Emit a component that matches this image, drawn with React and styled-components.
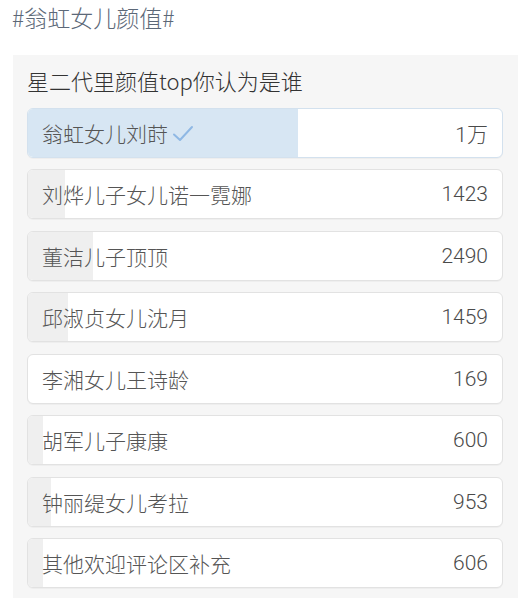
import React from "react";
import styled, { createGlobalStyle } from "styled-components";

const GlobalStyle = createGlobalStyle`
  body {
    margin: 0;
    background: #ffffff;
    font-family: "Noto Sans CJK SC", "Noto Sans", sans-serif;
  }
`;

const options = [
  { name: "翁虹女儿刘莳", count: "1万", fill: 57, chosen: true },
  { name: "刘烨儿子女儿诺一霓娜", count: "1423", fill: 7.8 },
  { name: "董洁儿子顶顶", count: "2490", fill: 13.8 },
  { name: "邱淑贞女儿沈月", count: "1459", fill: 8.4 },
  { name: "李湘女儿王诗龄", count: "169", fill: 0 },
  { name: "胡军儿子康康", count: "600", fill: 3.2 },
  { name: "钟丽缇女儿考拉", count: "953", fill: 4.9 },
  { name: "其他欢迎评论区补充", count: "606", fill: 3.2 },
];

const Page = styled.div`
  width: 532px;
  height: 598px;
  overflow: hidden;
`;

const Topic = styled.div`
  padding: 0 0 0 12px;
  font-size: 23px;
  font-weight: 300;
  line-height: 34px;
  color: #5c6878;
`;

const Panel = styled.div`
  margin: 21px 14px 0 13px;
  background: #f6f6f6;
  padding: 9px 15px 10px 14px;
  display: flex;
  flex-direction: column;
  gap: 11.5px;
`;

const Question = styled.div`
  font-size: 22px;
  font-weight: 300;
  line-height: 32px;
  color: #333333;
`;

const Row = styled.div`
  position: relative;
  height: 50px;
  box-sizing: border-box;
  border: 1px solid ${(p) => (p.chosen ? "#d3e1ee" : "#e2e2e2")};
  border-radius: 6px;
  background: #ffffff;
  overflow: hidden;
  display: flex;
  align-items: center;
  justify-content: space-between;
  padding: 0 14px 0 14px;
  box-shadow: 0 1px 0 rgba(0, 0, 0, 0.03);
`;

const Fill = styled.div`
  position: absolute;
  left: 0;
  top: 0;
  bottom: 0;
  background: ${(p) => (p.chosen ? "#d7e6f3" : "#efefef")};
`;

const Label = styled.span`
  position: relative;
  display: flex;
  align-items: center;
  gap: 3px;
  font-size: 21px;
  font-weight: 300;
  color: #555555;
`;

const Count = styled.span`
  position: relative;
  font-family: Roboto, "Noto Sans CJK SC", sans-serif;
  font-size: 21px;
  font-weight: 300;
  color: #4a4a4a;
`;

const Tick = () => (
  <svg width="24" height="22" viewBox="0 0 24 22" fill="none">
    <path
      d="M3 12.5 L9 18 L21 5"
      stroke="#8fb8e4"
      strokeWidth="2"
      strokeLinecap="round"
      strokeLinejoin="round"
    />
  </svg>
);

export default function App() {
  return (
    <Page>
      <GlobalStyle />
      <Topic>#翁虹女儿颜值#</Topic>
      <Panel>
        <Question>星二代里颜值top你认为是谁</Question>
        {options.map((o) => (
          <Row key={o.name} chosen={o.chosen}>
            <Fill chosen={o.chosen} style={{ width: `${o.fill}%` }} />
            <Label>
              {o.name}
              {o.chosen && <Tick />}
            </Label>
            <Count>{o.count}</Count>
          </Row>
        ))}
      </Panel>
    </Page>
  );
}
